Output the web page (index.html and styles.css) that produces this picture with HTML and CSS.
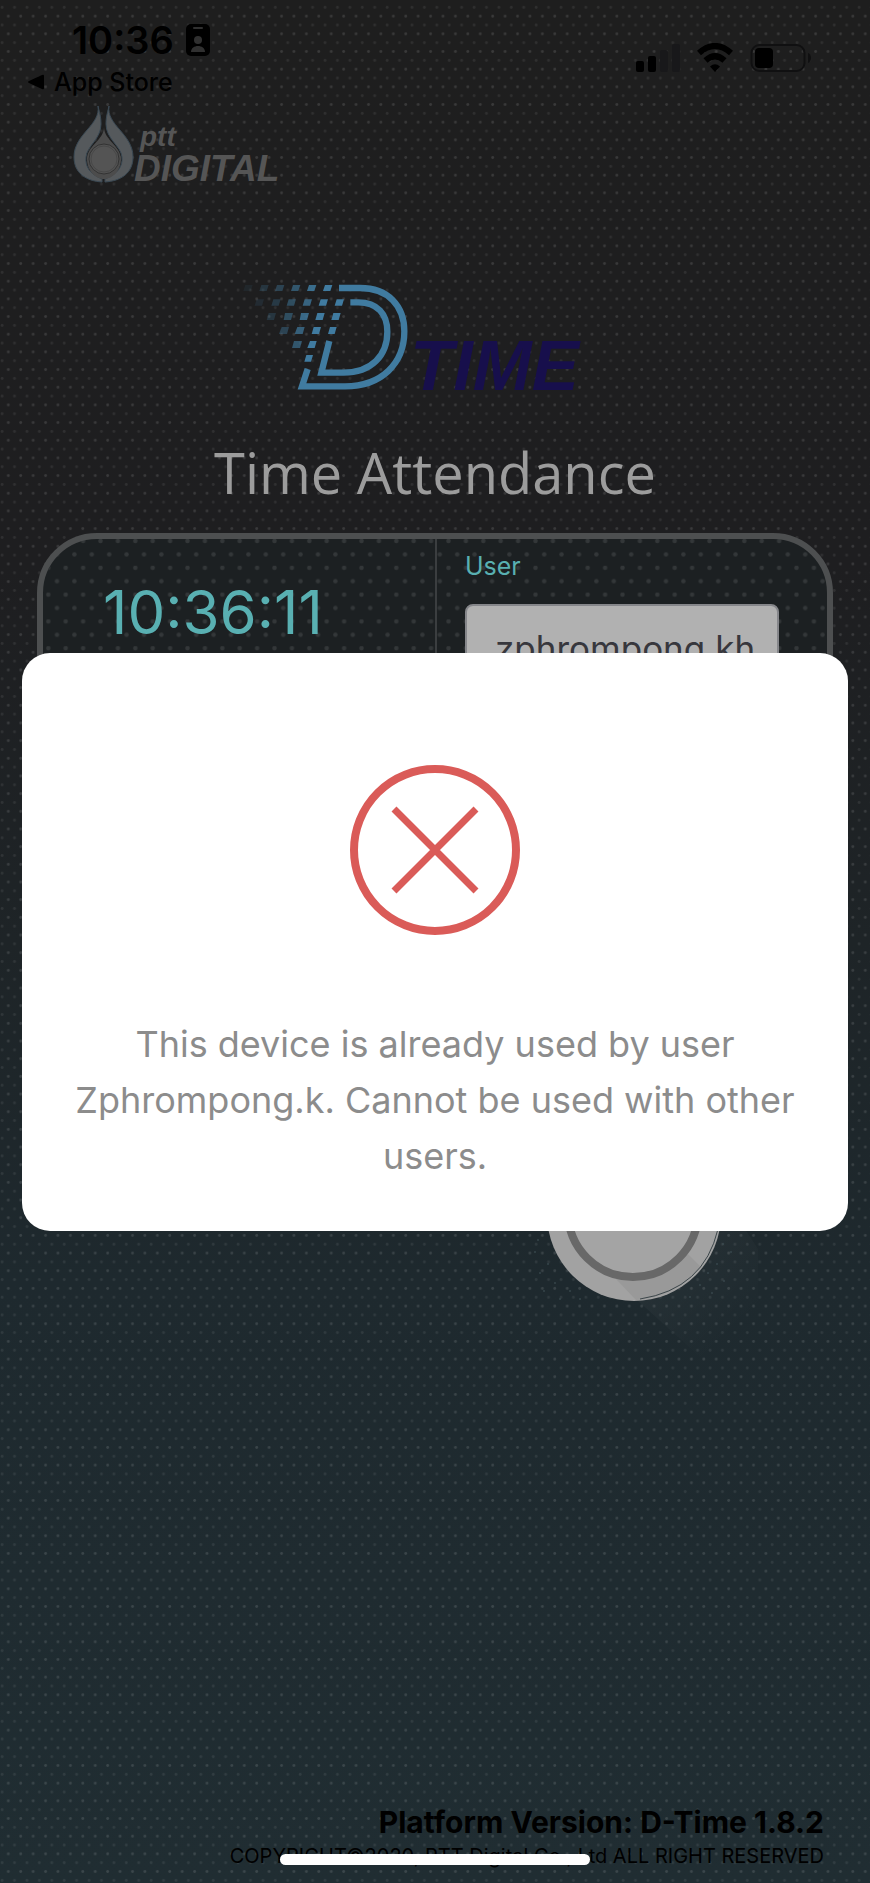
FILE: index.html
```html
<!DOCTYPE html>
<html lang="en">
<head>
<meta charset="utf-8">
<meta name="viewport" content="width=device-width, initial-scale=1">
<title>D-Time</title>
<link rel="stylesheet" href="styles.css">
</head>
<body>
<div class="screen">
  <svg class="dots" aria-hidden="true">
    <defs>
      <pattern id="dots-small" width="12.42" height="17.67" patternUnits="userSpaceOnUse">
        <circle cx="8.3" cy="16.2" r="1.4" fill="#fff" fill-opacity=".12"/>
        <circle cx="2.1" cy="7.4" r="1.4" fill="#fff" fill-opacity=".08"/>
      </pattern>
    </defs>
    <rect width="100%" height="100%" fill="url(#dots-small)"/>
  </svg>

  <header class="status">
    <div class="status-left">
      <div class="clock">
        <span>10:36</span>
        <svg width="24" height="32" viewBox="0 0 24 32" aria-hidden="true">
          <rect width="24" height="32" rx="5"/>
          <rect x="7" y="3" width="10" height="2" rx="1" fill="#303030"/>
          <circle cx="12" cy="16" r="4" fill="#303030"/>
          <path d="M5 28c0-8 14-8 14 0z" fill="#303030"/>
        </svg>
      </div>
      <a class="back" href="#">
        <svg width="16" height="16" viewBox="0 0 16 16" aria-hidden="true"><path d="M1 7 14 1q2-1 2 1v12q0 2-2 1L1 9q-2-1 0-2z"/></svg>
        App Store
      </a>
    </div>
    <div class="status-right" aria-hidden="true">
      <svg width="44" height="30" viewBox="0 0 44 30">
        <rect y="18" width="8" height="11" rx="2"/>
        <rect x="12" y="13" width="8" height="16" rx="2"/>
        <rect x="24" y="7" width="8" height="22" rx="2" fill="#18181a"/>
        <rect x="36" y="1" width="8" height="28" rx="2" fill="#18181a"/>
      </svg>
      <svg width="38" height="30" viewBox="0 0 38 30">
        <path d="M3 10Q19-4 35 10M9.500 17.500Q19 9 28.500 17.500" fill="none" stroke="#000" stroke-width="6"/>
        <path d="M19 29l-5-5.500q5-4.500 10 0z"/>
      </svg>
      <svg width="62" height="30" viewBox="0 0 62 30">
        <rect x="1.500" y="2" width="53" height="26" rx="8" fill="none" stroke="#101011" stroke-width="2"/>
        <rect x="5" y="5" width="18" height="20" rx="4"/>
        <path d="M58 10q3 1 3 5t-3 5z" fill="#101011"/>
      </svg>
    </div>
  </header>

  <div class="company">
    <svg width="230" height="84" viewBox="0 0 230 84" role="img" aria-label="ptt Digital">
      <g fill="#55595c" stroke="#3a4954" stroke-width="1">
        <path d="M25 2C28 21 1 30 1 53c0 16 12 24 28 25V75C17 70 12 63 13 53 14 42 28 35 28 20 28 12 26 7 25 2z"/>
        <path d="M36 2C33 21 60 30 60 53c0 16-12 24-28 25V75C44 70 50 63 49 53 48 42 33 35 33 20 33 12 35 7 36 2z"/>
      </g>
      <path d="M31 23C31 36 14 42 14 55c0 11 8 20 17 20s17-9 17-20C48 42 31 36 31 23z" fill="#4c4c4c"/>
      <circle cx="31" cy="55" r="15" fill="#535353" stroke="#333"/>
      <circle cx="31" cy="55" r="13" fill="#545454" stroke="#484848"/>
      <text class="ptt-name" x="67" y="42">ptt</text>
      <text class="ptt-unit" x="61" y="77">DIGITAL</text>
    </svg>
  </div>

  <main class="content">
    <svg class="product" width="410" height="130" viewBox="0 0 1230 390" role="img" aria-label="D TIME">
      <g fill="none" stroke="#407ba0" stroke-width="19">
        <path d="M327 54H390C475 54 523 108 523 184C523 280 455 349 345 349H216L233 297"/>
        <path d="M361 97H385C442 97 472 132 472 185C472 256 425 308 340 308H274L298 213"/>
      </g>
      <g fill="#407ba0">
        <path d="M285 45h22l-6 18h-22z"/><path d="M237 45h22l-6 18h-22z" opacity=".85"/><path d="M189 45h22l-6 18h-22z" opacity=".6"/><path d="M141 45h22l-6 18h-22z" opacity=".4"/><path d="M94 45h22l-6 18H88z" opacity=".25"/><path d="M46 45h22l-6 18H40z" opacity=".1"/>
        <path d="M320 88h22l-6 19h-22z"/><path d="M272 88h22l-6 19h-22z"/><path d="M224 88h22l-6 19h-22z" opacity=".75"/><path d="M176 88h22l-6 19h-22z" opacity=".5"/><path d="M130 88h22l-6 19h-22z" opacity=".3"/><path d="M80 88h22l-6 19H74z" opacity=".15"/>
        <path d="M310 129h22l-6 21h-22z"/><path d="M262 129h22l-6 21h-22z"/><path d="M213 129h24l-6 21h-22z" opacity=".8"/><path d="M165 129h24l-6 21h-22z" opacity=".5"/><path d="M116 129h22l-6 21h-22z" opacity=".25"/>
        <path d="M300 171h20l-6 21h-20z"/><path d="M251 171h22l-6 21h-22z"/><path d="M202 171h22l-6 21h-24z" opacity=".7"/><path d="M155 171h22l-6 21h-24z" opacity=".4"/>
        <path d="M240 213h20l-6 21h-22z"/><path d="M192 213h24l-6 21h-24z" opacity=".6"/>
        <path d="M229 255h20l-6 20h-20z"/>
      </g>
      <text class="product-name" x="540" y="359">TIME</text>
    </svg>
    <h1 class="title">Time Attendance</h1>

    <section class="card">
      <svg class="dots" aria-hidden="true">
        <defs>
          <pattern id="dots-large" width="17.4" height="26.8" patternUnits="userSpaceOnUse">
            <circle cx="14" cy="15.400" r="2.200" fill="#fff" fill-opacity=".1"/>
            <circle cx="5.300" cy="2" r="2.200" fill="#fff" fill-opacity=".1"/>
          </pattern>
        </defs>
        <rect width="100%" height="100%" fill="url(#dots-large)"/>
      </svg>
      <div class="card-time">10:36:11</div>
      <div class="card-user">
        <label for="user">User</label>
        <input id="user" type="text" value="zphrompong.kh">
      </div>
    </section>

    <div class="action">
      <button class="round" type="button" aria-label="Check in">
        <svg width="260" height="240" viewBox="500 1122 260 240" aria-hidden="true">
          <defs>
            <linearGradient id="shade" x1="0" y1="0" x2=".6" y2="1">
              <stop offset=".3" stop-color="#fff" stop-opacity=".05"/>
              <stop offset="1" stop-color="#fff" stop-opacity="0"/>
            </linearGradient>
          </defs>
          <path d="M700 1160 758 1248 758 1300 700 1356 636 1298z" fill="url(#shade)"/>
          <g fill="#405055" fill-opacity=".7">
            <circle cx="538" cy="1239" r="1"/><circle cx="535" cy="1251" r="1"/><circle cx="548" cy="1263" r="1"/><circle cx="540" cy="1272" r="1"/><circle cx="555" cy="1282" r="1"/><circle cx="544" cy="1290" r="1"/><circle cx="570" cy="1290" r="1"/><circle cx="560" cy="1298" r="1"/><circle cx="580" cy="1298" r="1"/><circle cx="723" cy="1243" r="1"/><circle cx="731" cy="1251" r="1"/><circle cx="717" cy="1263" r="1"/><circle cx="708" cy="1272" r="1"/><circle cx="724" cy="1280" r="1"/><circle cx="700" cy="1284" r="1"/><circle cx="712" cy="1292" r="1"/><circle cx="690" cy="1296" r="1"/>
          </g>
          <circle cx="634" cy="1213" r="87" fill="#a2a2a2"/>
          <path d="M616 1278 636 1299Q676 1296 701 1266L680 1245z" fill="#999"/>
          <path d="M718 1228Q704 1288 640 1298" fill="none" stroke="#3c464a" stroke-width="1"/>
          <circle cx="633" cy="1211" r="65" fill="#a4a4a4" stroke="#686868" stroke-width="8"/>
        </svg>
      </button>
    </div>
  </main>

  <footer class="footer">
    <div class="version">Platform Version: D-Time 1.8.2</div>
    <div class="copyright">COPYRIGHT©2020, PTT Digital Co., Ltd ALL RIGHT RESERVED</div>
  </footer>

  <div class="overlay">
    <div class="dialog" role="alertdialog" aria-labelledby="message">
      <svg width="172" height="172" viewBox="0 0 172 172" fill="none" stroke="#da5b58" aria-hidden="true">
        <circle cx="86" cy="86" r="81" stroke-width="8"/>
        <path d="M45 45l82 82M127 45l-82 82" stroke-width="7"/>
      </svg>
      <p id="message">This device is already used by user Zphrompong.k. Cannot be used with other users.</p>
    </div>
  </div>
  <div class="home-bar"></div>
</div>
</body>
</html>
```
FILE: styles.css
```css
* { box-sizing: border-box; }

body {
  margin: 0;
  font-family: Inter, "Liberation Sans", sans-serif;
}

.screen {
  position: relative;
  display: flex;
  flex-direction: column;
  min-height: 100vh;
  overflow: hidden;
  background: linear-gradient(#1e1e1e 0%, #1e1e20 30%, #1e2427 50%, #1e292e 68%, #202d32 100%);
}

.dots {
  position: absolute;
  inset: 0;
  width: 100%;
  height: 100%;
}

.status,
.company,
.content,
.footer { position: relative; }

.status {
  display: flex;
  justify-content: space-between;
  padding: 20px 58px 0 28px;
}

.clock {
  display: flex;
  align-items: center;
  gap: 12px;
  height: 40px;
  padding-left: 44px;
  font-size: 38px;
  font-weight: 600;
}

.back {
  display: flex;
  align-items: center;
  gap: 10px;
  height: 44px;
  color: #000;
  font-size: 25px;
  font-weight: 500;
  text-decoration: none;
}

.status-right {
  display: flex;
  gap: 16px;
  padding-top: 23px;
}

.company {
  height: 80px;
  padding-left: 73px;
}

.ptt-name,
.ptt-unit,
.product-name {
  font-family: "Liberation Sans", sans-serif;
  font-weight: 700;
  font-style: italic;
}

.ptt-name { font-size: 28px; fill: #555; }
.ptt-unit { font-size: 37px; fill: #555; }
.product-name { font-size: 212px; fill: #170f4c; }

.content {
  display: flex;
  flex: 1;
  flex-direction: column;
  align-items: center;
  padding: 86px 37px 0;
}

.title {
  margin: 32px 0 21px;
  color: #9c9c9c;
  font: 400 56px/80px "Open Sans", sans-serif;
}

.card {
  position: relative;
  display: grid;
  grid-template-columns: 1fr 1fr;
  width: 100%;
  height: 590px;
  overflow: hidden;
  border: 6px solid #4d4f50;
  border-radius: 60px;
  background: #1c2022;
}

.card-time {
  position: relative;
  padding: 35px 0 0 60px;
  color: #59b0b2;
  font-size: 60px;
  line-height: 76px;
}

.card-user {
  position: relative;
  padding: 12px 48px 0 28px;
  border-left: 2px solid #3b3e40;
}

.card-user label {
  display: block;
  margin-bottom: 23px;
  color: #59b0b2;
  font-size: 25px;
  line-height: 30px;
}

.card-user input {
  width: 100%;
  height: 88px;
  padding: 0 20px 0 28px;
  border: 2px solid #85868a;
  border-radius: 8px;
  background: #b1b1b1;
  color: #37373d;
  font: 400 35px/44px Inter, sans-serif;
}

.action {
  display: flex;
  justify-content: flex-end;
  width: 100%;
  padding-right: 73px;
}

.round {
  padding: 0;
  border: 0;
  background: none;
}

.round svg { display: block; }

.footer {
  padding: 0 46px 12px;
  text-align: right;
}

.version { font-size: 30px; font-weight: 700; line-height: 38px; }
.copyright { font-size: 20px; line-height: 30px; }

.overlay {
  position: absolute;
  inset: 0;
  display: flex;
  align-items: center;
  justify-content: center;
  padding: 0 22px;
}

.dialog {
  display: flex;
  flex-direction: column;
  align-items: center;
  gap: 80px;
  width: 100%;
  padding: 111px 40px 47px;
  border-radius: 28px;
  background: #fff;
}

.dialog p {
  margin: 0;
  color: #8c8c8c;
  font-size: 36px;
  line-height: 56px;
  text-align: center;
}

.home-bar {
  position: absolute;
  bottom: 18px;
  left: 50%;
  width: 310px;
  height: 11px;
  margin-left: -155px;
  border-radius: 6px;
  background: #fff;
}
```
